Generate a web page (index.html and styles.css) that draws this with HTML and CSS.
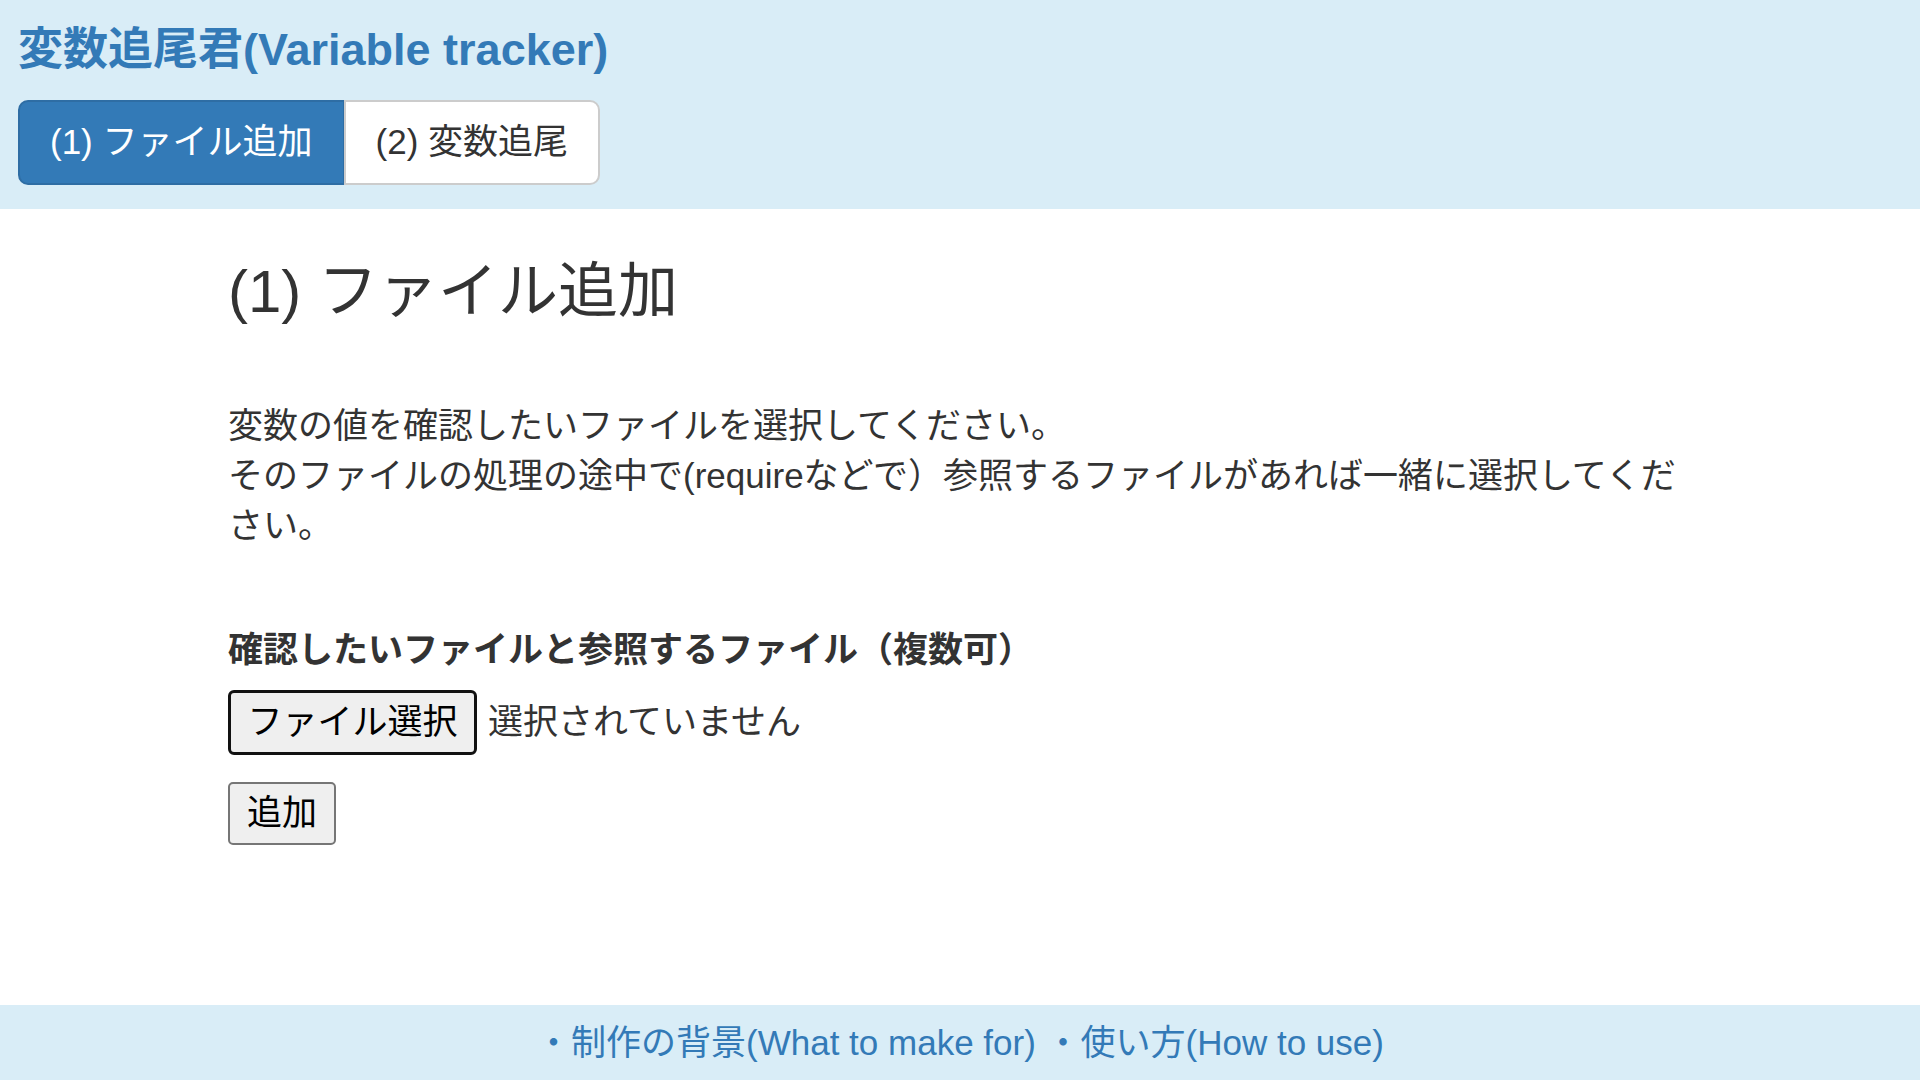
FILE: index.html
```html
<!DOCTYPE html>
<html lang="ja">
<head>
<meta charset="utf-8">
<title>変数追尾君(Variable tracker)</title>
<link rel="stylesheet" href="styles.css">
</head>
<body>
<header class="site-header">
  <h1 class="site-title">変数追尾君(Variable tracker)</h1>
  <nav class="tabs">
    <a class="tab tab-active" href="#">(1) ファイル追加</a>
    <a class="tab tab-default" href="#">(2) 変数追尾</a>
  </nav>
</header>
<main class="main">
  <div class="content">
    <h2 class="page-heading">(1) ファイル追加</h2>
    <p class="lead-text">変数の値を確認したいファイルを選択してください。<br>そのファイルの処理の途中で(requireなどで）参照するファイルがあれば一緒に選択してください。</p>
    <label class="field-label">確認したいファイルと参照するファイル（複数可）</label>
    <div class="file-row">
      <button class="file-button" type="button">ファイル選択</button>
      <span class="file-status">選択されていません</span>
    </div>
    <button class="add-button" type="button">追加</button>
  </div>
</main>
<footer class="site-footer">
  <a class="footer-link" href="#">・制作の背景(What to make for)</a>
  <a class="footer-link" href="#">・使い方(How to use)</a>
</footer>
</body>
</html>
```
FILE: styles.css
```css
html, body {
  margin: 0;
  padding: 0;
}
body {
  font-family: "Liberation Sans", "Noto Sans CJK JP", sans-serif;
  color: #333;
  background: #fff;
  min-height: 100vh;
  display: flex;
  flex-direction: column;
  font-size: 35px;
  line-height: 50px;
}
.site-header {
  background: #d9edf7;
  padding: 25px 18px 24px;
}
.site-title {
  margin: 0 0 25px;
  font-size: 45px;
  line-height: 1.1;
  font-weight: bold;
  color: #337ab7;
}
.tabs {
  display: flex;
}
.tab {
  display: block;
  font-size: 35px;
  line-height: 50px;
  padding: 15.5px 30px;
  border: 2px solid;
  text-decoration: none;
}
.tab-active {
  background: #337ab7;
  border-color: #2e6da4;
  color: #fff;
  border-radius: 10px 0 0 10px;
}
.tab-default {
  background: #fff;
  border-color: #ccc;
  color: #333;
  border-radius: 0 10px 10px 0;
  margin-left: -1px;
}
.main {
  flex: 1;
}
.content {
  width: 1464px;
  margin: 0 auto;
}
.page-heading {
  margin: 50px 0 0;
  font-size: 60px;
  line-height: 1.1;
  font-weight: 400;
  color: #333;
}
.lead-text {
  margin: 76px 0 0;
}
.field-label {
  display: block;
  margin: 74px 0 15px;
  font-weight: bold;
}
.file-row {
  display: flex;
  align-items: center;
  gap: 11px;
}
.file-button {
  height: 65px;
  padding: 0 16.5px;
  border: 3px solid #111;
  border-radius: 6px;
  background: #efefef;
  color: #000;
  font-family: inherit;
  font-size: 35px;
  line-height: 50px;
}
.file-status {
  color: #333;
}
.add-button {
  display: block;
  margin-top: 27px;
  height: 63px;
  padding: 0 17px;
  border: 2px solid #767676;
  border-radius: 5px;
  background: #efefef;
  color: #000;
  font-family: inherit;
  font-size: 35px;
  line-height: 50px;
}
.site-footer {
  background: #d9edf7;
  padding: 12.5px 0;
  text-align: center;
}
.footer-link {
  color: #337ab7;
  text-decoration: none;
}
```
